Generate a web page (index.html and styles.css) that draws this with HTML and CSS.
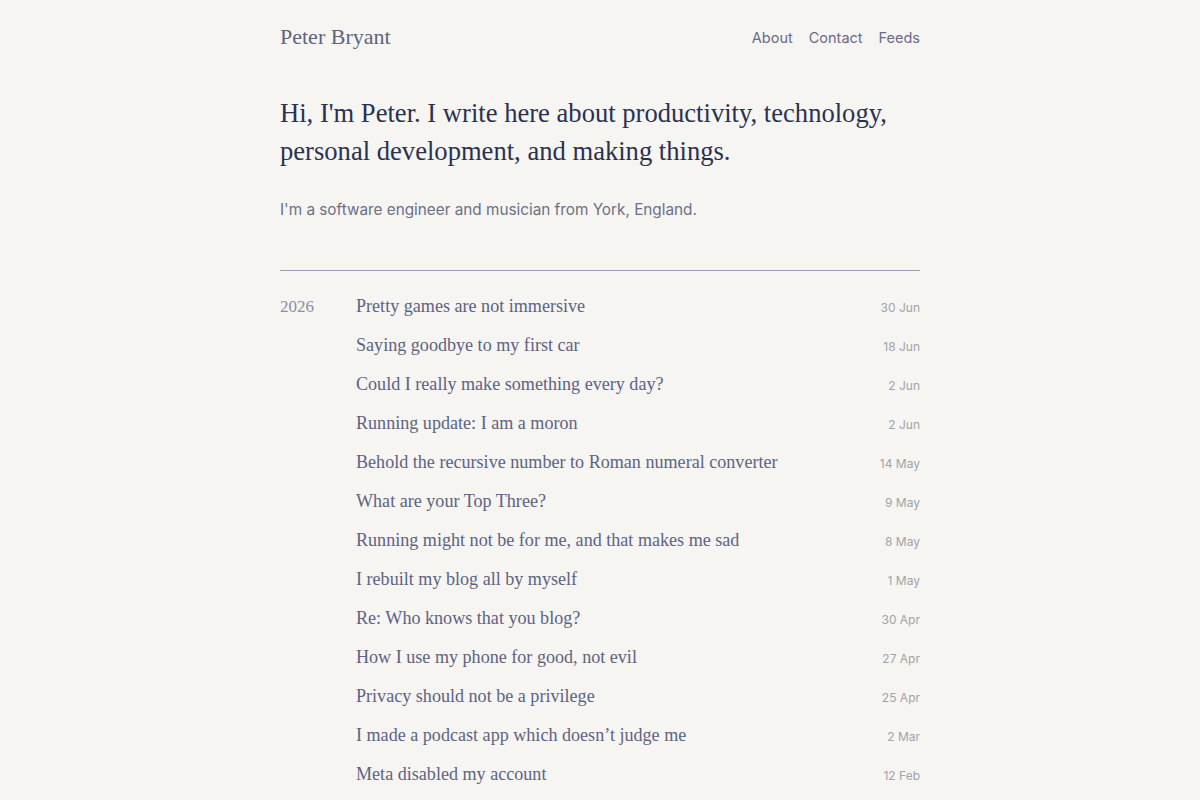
FILE: index.html
```html
<!DOCTYPE html>
<html lang="en">
<head>
<meta charset="utf-8">
<title>Peter Bryant</title>
<link rel="stylesheet" href="styles.css">
</head>
<body>
<div class="page">
  <header class="site-header">
    <a class="site-title" href="#">Peter Bryant</a>
    <nav class="site-nav">
      <a href="#">About</a>
      <a href="#">Contact</a>
      <a href="#">Feeds</a>
    </nav>
  </header>

  <section class="intro">
    <h1 class="intro-lead">Hi, I'm Peter. I write here about productivity, technology, personal development, and making things.</h1>
    <p class="intro-sub">I'm a software engineer and musician from York, England.</p>
  </section>

  <hr class="divider">

  <section class="archive">
    <div class="year">2026</div>
    <ul class="posts">
      <li class="post"><a href="#">Pretty games are not immersive</a><span class="date">30 Jun</span></li>
      <li class="post"><a href="#">Saying goodbye to my first car</a><span class="date">18 Jun</span></li>
      <li class="post"><a href="#">Could I really make something every day?</a><span class="date">2 Jun</span></li>
      <li class="post"><a href="#">Running update: I am a moron</a><span class="date">2 Jun</span></li>
      <li class="post"><a href="#">Behold the recursive number to Roman numeral converter</a><span class="date">14 May</span></li>
      <li class="post"><a href="#">What are your Top Three?</a><span class="date">9 May</span></li>
      <li class="post"><a href="#">Running might not be for me, and that makes me sad</a><span class="date">8 May</span></li>
      <li class="post"><a href="#">I rebuilt my blog all by myself</a><span class="date">1 May</span></li>
      <li class="post"><a href="#">Re: Who knows that you blog?</a><span class="date">30 Apr</span></li>
      <li class="post"><a href="#">How I use my phone for good, not evil</a><span class="date">27 Apr</span></li>
      <li class="post"><a href="#">Privacy should not be a privilege</a><span class="date">25 Apr</span></li>
      <li class="post"><a href="#">I made a podcast app which doesn’t judge me</a><span class="date">2 Mar</span></li>
      <li class="post"><a href="#">Meta disabled my account</a><span class="date">12 Feb</span></li>
    </ul>
  </section>
</div>
</body>
</html>
```

FILE: styles.css
```css
html, body {
  margin: 0;
  padding: 0;
  background: #f6f5f2;
}

body {
  font-family: "Liberation Serif", "DejaVu Serif", serif;
  color: #5d6383;
}

a {
  color: inherit;
  text-decoration: none;
}

.page {
  width: 640px;
  margin: 0 auto;
}

.site-header {
  height: 74px;
  display: flex;
  align-items: center;
  justify-content: space-between;
}

.site-title {
  font-size: 22px;
  color: #5d6383;
}

.site-nav {
  display: flex;
  gap: 16px;
  font-family: Inter, "Liberation Sans", sans-serif;
  font-size: 14.5px;
}

.site-nav a {
  color: #676c88;
}

.intro {
  padding-top: 20px;
}

.intro-lead {
  margin: 0;
  font-weight: normal;
  font-size: 26.6px;
  line-height: 38px;
  color: #2b3150;
}

.intro-sub {
  margin: 30px 0 0;
  font-family: Inter, "Liberation Sans", sans-serif;
  font-size: 15.3px;
  color: #6b7088;
}

.divider {
  margin: 51px 0 0;
  border: 0;
  border-top: 1px solid #9c9fbb;
}

.archive {
  display: flex;
  padding-top: 16px;
}

.year {
  width: 76px;
  flex: none;
  font-size: 17px;
  color: #8a8ea6;
  line-height: 39px;
}

.posts {
  list-style: none;
  margin: 0;
  padding: 0;
  flex: 1;
}

.post {
  display: flex;
  justify-content: space-between;
  align-items: baseline;
  height: 39px;
  line-height: 39px;
  font-size: 18.1px;
}

.post a {
  color: #5d6383;
}

.date {
  font-family: Inter, "Liberation Sans", sans-serif;
  font-size: 12px;
  color: #a2a2a9;
}
```
